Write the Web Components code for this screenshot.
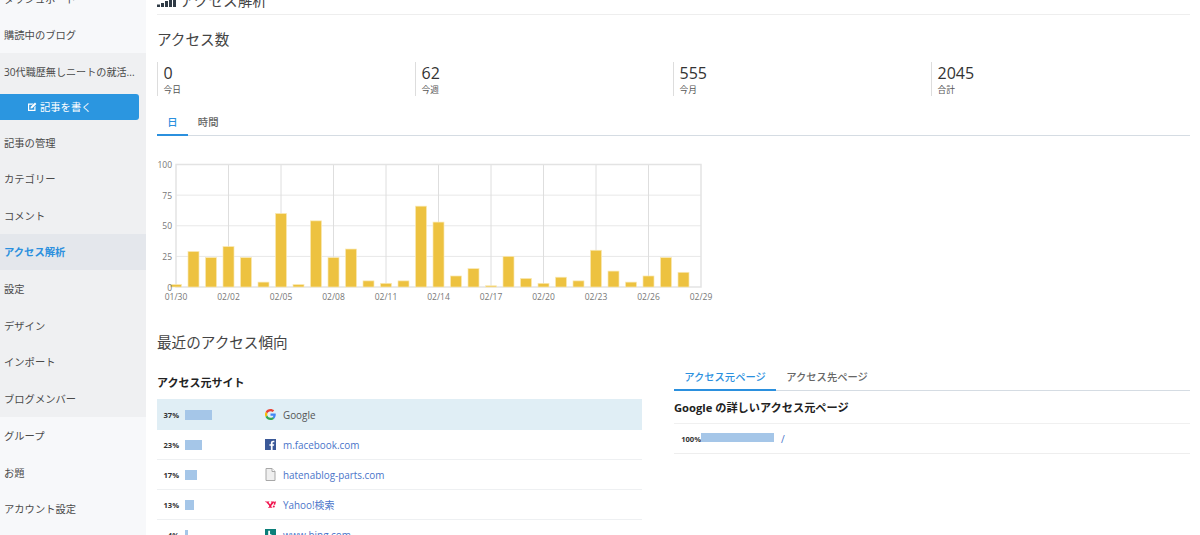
<!DOCTYPE html>
<html lang="ja">
<head>
<meta charset="utf-8">
<title>アクセス解析</title>
<style>
  html, body { margin: 0; height: 100%; overflow: hidden; background: #fff; }
  body { font-family: "Open Sans", "Noto Sans CJK JP", sans-serif; color: #444; }
</style>
</head>
<body>
<admin-page></admin-page>

<script>
const FONT = '"Open Sans", "Noto Sans CJK JP", sans-serif';

class NavItem extends HTMLElement {
  constructor() {
    super();
    this.attachShadow({ mode: 'open' });
    this.shadowRoot.innerHTML = `
      <style>
        :host { display: flex; align-items: center; height: 36.6px; padding-left: 4px; font-size: 10.3px; color: #4a4a4a; white-space: nowrap; }
        :host([active]) { background: #e4e7ec; color: #2b90de; font-weight: 700; }
      </style>
      <slot></slot>`;
  }
}
customElements.define('nav-item', NavItem);

class SideNav extends HTMLElement {
  constructor() {
    super();
    this.attachShadow({ mode: 'open' });
    this.shadowRoot.innerHTML = `
      <style>
        :host { display: block; width: 146px; flex: none; height: 535px; overflow: hidden; background: #f7f8fa; font-family: ${FONT}; }
        .scroll { margin-top: -20px; }
        .blog { background: #eff0f2; height: 364px; }
        .write { display: flex; align-items: center; gap: 3px; width: 139px; height: 26px; margin: 4px 0; padding-left: 27px; box-sizing: border-box;
                 background: #2b96e0; border-radius: 0 3px 3px 0; color: #fff; font-size: 10.3px; }
        svg { width: 10px; height: 10px; }
        .name { font-size: 10.1px; }
      </style>
      <div class="scroll">
        <nav-item>ダッシュボード</nav-item>
        <nav-item>購読中のブログ</nav-item>
        <div class="blog">
          <nav-item class="name">30代職歴無しニートの就活...</nav-item>
          <div class="write">
            <svg viewBox="0 0 10 10"><path d="M1 1.500h5.500L5.300 2.700H2.200v5.100h5.100V5l1.200-1.200v5.200H1z" fill="#fff"/><path d="M3.500 6.500l.3-1.700L8 .6 9.400 2 5.200 6.200z" fill="#fff"/></svg>
            <span>記事を書く</span>
          </div>
          <nav-item>記事の管理</nav-item>
          <nav-item>カテゴリー</nav-item>
          <nav-item>コメント</nav-item>
          <nav-item active>アクセス解析</nav-item>
          <nav-item>設定</nav-item>
          <nav-item>デザイン</nav-item>
          <nav-item>インポート</nav-item>
          <nav-item>ブログメンバー</nav-item>
        </div>
        <nav-item>グループ</nav-item>
        <nav-item>お題</nav-item>
        <nav-item>アカウント設定</nav-item>
      </div>`;
  }
}
customElements.define('side-nav', SideNav);

class StatBlock extends HTMLElement {
  constructor() {
    super();
    this.attachShadow({ mode: 'open' });
    this.shadowRoot.innerHTML = `
      <style>
        :host { display: block; height: 34px; border-left: 1.5px solid #ddd; padding-left: 5.500px; box-sizing: border-box; overflow: hidden; }
        .num { font-size: 16px; line-height: 23px; color: #333; }
        .lab { font-size: 8.700px; line-height: 10px; color: #555; }
      </style>
      <div class="num">${this.getAttribute('num')}</div>
      <div class="lab">${this.getAttribute('label')}</div>`;
  }
}
customElements.define('stat-block', StatBlock);

class TabBar extends HTMLElement {
  constructor() {
    super();
    this.attachShadow({ mode: 'open' });
    this.shadowRoot.innerHTML = `
      <style>
        :host { display: flex; border-bottom: 1px solid #d5dce3; font-size: 10.3px; color: #666; font-weight: 500; }
      </style>
      <slot></slot>`;
  }
}
customElements.define('tab-bar', TabBar);

class TabItem extends HTMLElement {
  constructor() {
    super();
    this.attachShadow({ mode: 'open' });
    this.shadowRoot.innerHTML = `
      <style>
        :host { display: block; padding: 0 10.200px; height: 25px; line-height: 22px; box-sizing: border-box; white-space: nowrap; margin-bottom: -1px; }
        :host([active]) { color: #2b90de; border-bottom: 2px solid #2b90de; }
      </style>
      <slot></slot>`;
  }
}
customElements.define('tab-item', TabItem);

class AccessChart extends HTMLElement {
  constructor() {
    super();
    this.attachShadow({ mode: 'open' });
    const vals = [2,29,24,33,24,4,60,2,54,24,31,5,3,5,66,53,9,15,1,25,7,3,8,5,30,13,4,9,24,12];
    const labels = ['01/30','02/02','02/05','02/08','02/11','02/14','02/17','02/20','02/23','02/26','02/29'];
    const x0 = 19, step = 17.5, top = 4.5, h = 122.5;
    let s = '';
    // horizontal grid
    [25, 50, 75].forEach(v => {
      const y = top + h - v * h / 100;
      s += `<line x1="${x0}" x2="${x0 + 525}" y1="${y}" y2="${y}" stroke="#e8e8e8"/>`;
    });
    // vertical grid
    for (let i = 1; i < 10; i++) {
      const x = x0 + i * 3 * step;
      s += `<line x1="${x}" x2="${x}" y1="${top}" y2="${top + h}" stroke="#dedede"/>`;
    }
    // frame
    s += `<path d="M${x0} ${top}H${x0 + 525}V${top + h}H${x0}Z" fill="none" stroke="#e3e3e3" stroke-width="1.500"/>`;
    // bars
    vals.forEach((v, i) => {
      const bh = v * h / 100;
      const cx = x0 + i * step;
      s += `<rect x="${cx - 5.5}" y="${top + h - bh}" width="11" height="${bh}" fill="#edc240" stroke="#f9e9b5" stroke-width=".7"/>`;
    });
    // y labels
    [0, 25, 50, 75, 100].forEach(v => {
      const y = top + h - v * h / 100 + 3.5;
      s += `<text x="${x0 - 4}" y="${y}" text-anchor="end">${v}</text>`;
    });
    labels.forEach((l, i) => {
      s += `<text x="${x0 + i * 3 * step}" y="${top + h + 12.5}" text-anchor="middle">${l}</text>`;
    });
    this.shadowRoot.innerHTML = `
      <style>
        :host { display: block; height: 150px; }
        svg { display: block; overflow: visible; }
        text { font: 8.500px ${FONT}; fill: #777; }
      </style>
      <svg width="570" height="150">${s}</svg>`;
  }
}
customElements.define('access-chart', AccessChart);

const ICONS = {
  google: `<svg viewBox="0 0 48 48"><path fill="#EA4335" d="M24 9.500c3.500 0 6.700 1.200 9.200 3.600l6.900-6.900C35.900 2.400 30.500 0 24 0 14.600 0 6.500 5.400 2.600 13.200l8 6.200C12.400 13.700 17.700 9.500 24 9.500z"/><path fill="#4285F4" d="M46.900 24.500c0-1.600-.1-3.100-.4-4.500H24v9h12.900c-.6 3-2.200 5.500-4.800 7.200l7.700 6c4.500-4.200 7.100-10.300 7.100-17.700z"/><path fill="#FBBC05" d="M10.500 28.600A14.500 14.500 0 0 1 10.500 19.400l-8-6.200A24 24 0 0 0 2.600 34.800z"/><path fill="#34A853" d="M24 48c6.500 0 11.900-2.100 15.900-5.800l-7.700-6c-2.200 1.400-4.900 2.300-8.200 2.300-6.300 0-11.600-4.200-13.500-9.900l-8 6.200C6.500 42.600 14.600 48 24 48z"/></svg>`,
  facebook: `<svg viewBox="0 0 12 12"><rect width="12" height="12" fill="#3b5998"/><path fill="#fff" d="M8.300 12V7.400h1.500l.2-1.800H8.300V4.500c0-.5.2-.9.900-.9h1V2c-.2 0-.8-.1-1.400-.1-1.400 0-2.400.9-2.400 2.400v1.300H4.800v1.800h1.600V12z"/></svg>`,
  doc: `<svg viewBox="0 0 11 13" style="height:13px;margin-top:-1px"><path d="M1 .5h6l3 3v9H1z" fill="#efefef" stroke="#a8a8a8"/><path d="M7 .5v3h3" fill="#fff" stroke="#a8a8a8"/></svg>`,
  yahoo: `<svg viewBox="0 0 12 12"><path fill="#f0134d" d="M0 2.800h5L4.300 3.500l-.5.100L5.600 6l1.700-2.400-.9-.1V2.800h4.300L7 7v1.700l1 .2v.6H3.300v-.6l1.200-.2V7.200L1.400 3.600.2 3.400zM9.500 6.200l1.600.1.900-3.600-2-.1z"/><circle cx="9.600" cy="8.300" r="1.100" fill="#f0134d"/></svg>`,
  bing: `<svg viewBox="0 0 12 12"><rect width="12" height="12" fill="#0b7f79"/><path fill="#fff" d="M3.500 2h2v3.500l3 1.300v2L5.500 10.500l-2-1z"/></svg>`
};

class SiteRow extends HTMLElement {
  constructor() {
    super();
    this.attachShadow({ mode: 'open' });
    const pct = this.getAttribute('pct');
    const w = this.getAttribute('bar');
    const link = this.hasAttribute('selected') ? '#555' : '#4a74c9';
    this.shadowRoot.innerHTML = `
      <style>
        :host { display: grid; grid-template-columns: 22px 80px 18px 1fr; align-items: center; height: 30px; box-sizing: border-box;
                border-bottom: 1px solid #eef0f2; font-size: 9.900px; }
        :host([selected]) { background: #e0eef5; height: 31px; border: 0; }
        .pct { font-size: 7.600px; font-weight: 700; text-align: right; color: #333; }
        .bar { height: 10px; margin-left: 6px; background: #a5c6e8; }
        .ico { width: 11px; height: 11px; margin-left: 6px; }
        .ico svg { display: block; width: 11px; height: 11px; }
        .txt { margin-left: 6px; color: ${link}; white-space: nowrap; }
      </style>
      <div class="pct">${pct}%</div>
      <div><div class="bar" style="width:${w}px"></div></div>
      <div class="ico">${ICONS[this.getAttribute('icon')]}</div>
      <div class="txt">${this.getAttribute('name')}</div>`;
  }
}
customElements.define('site-row', SiteRow);

class AdminPage extends HTMLElement {
  constructor() {
    super();
    this.attachShadow({ mode: 'open' });
    this.shadowRoot.innerHTML = `
      <style>
        :host { display: flex; width: 1200px; height: 535px; overflow: hidden; font-family: ${FONT}; color: #444; }
        main { flex: none; width: 1033px; margin-left: 11px; height: 535px; overflow: hidden; }
        .page-head { display: flex; align-items: center; gap: 3px; height: 26px; margin-top: -12px; border-bottom: 1.5px solid #eee; box-sizing: content-box; font-size: 14.600px; line-height: 20px; }
        .page-head svg { width: 20px; height: 10px; margin-top: 2px; }
        .page-head span { margin-top: -3px; }
        h2 { margin: 0; font-size: 14.600px; font-weight: 400; line-height: 20px; color: #444; }
        h3 { margin: 0; font-size: 11px; font-weight: 700; line-height: 14px; color: #222; }
        .sec1 { margin-top: 14px; }
        .stats { display: grid; grid-template-columns: repeat(4, 258px); margin-top: 13px; }
        .tabs1 { margin-top: 15px; }
        .chart { margin-top: 24px; }
        .sec2 { margin-top: 22px; }
        .cols { display: grid; grid-template-columns: 485px 516px; column-gap: 32px; margin-top: 15px; }
        .left h3 { margin: 9px 0 9px; }
        .right tab-bar { margin-top: -1px; }
        .right .sub { margin: 10px 0 8px; font-size: 11.200px; }
        .dest { display: flex; align-items: center; height: 31px; border-top: 1.5px solid #f0f0f0; border-bottom: 1px solid #eee; box-sizing: border-box; font-size: 10.200px; color: #4a74c9; }
        .dest b { width: 27px; text-align: right; font-size: 7.600px; color: #333; }
        .dest i { display: block; width: 73px; height: 9px; background: #a5c6e8; margin-top: -2px; }
        .dest span { margin-left: 7px; }
      </style>
      <side-nav></side-nav>
      <main>
        <div class="page-head">
          <svg viewBox="0 0 20 10"><path fill="#2f3a45" d="M0 7.500h3V10H0zM4 6h3v4H4zM8 4h3v6H8zM12 2h3v8h-3zM16 0h3v10h-3z"/></svg>
          <span>アクセス解析</span>
        </div>
        <h2 class="sec1">アクセス数</h2>
        <div class="stats">
          <stat-block num="0" label="今日"></stat-block>
          <stat-block num="62" label="今週"></stat-block>
          <stat-block num="555" label="今月"></stat-block>
          <stat-block num="2045" label="合計"></stat-block>
        </div>
        <tab-bar class="tabs1">
          <tab-item active>日</tab-item>
          <tab-item>時間</tab-item>
        </tab-bar>
        <access-chart class="chart"></access-chart>
        <h2 class="sec2">最近のアクセス傾向</h2>
        <div class="cols">
          <section class="left">
            <h3>アクセス元サイト</h3>
            <site-row selected pct="37" bar="27" icon="google" name="Google"></site-row>
            <site-row pct="23" bar="17" icon="facebook" name="m.facebook.com"></site-row>
            <site-row pct="17" bar="12" icon="doc" name="hatenablog-parts.com"></site-row>
            <site-row pct="13" bar="9" icon="yahoo" name="Yahoo!検索"></site-row>
            <site-row pct="4" bar="3" icon="bing" name="www.bing.com"></site-row>
          </section>
          <section class="right">
            <tab-bar>
              <tab-item active>アクセス元ページ</tab-item>
              <tab-item>アクセス先ページ</tab-item>
            </tab-bar>
            <h3 class="sub">Google の詳しいアクセス元ページ</h3>
            <div class="dest"><b>100%</b><i></i><span>/</span></div>
          </section>
        </div>
      </main>`;
  }
}
customElements.define('admin-page', AdminPage);
</script>
</body>
</html>
